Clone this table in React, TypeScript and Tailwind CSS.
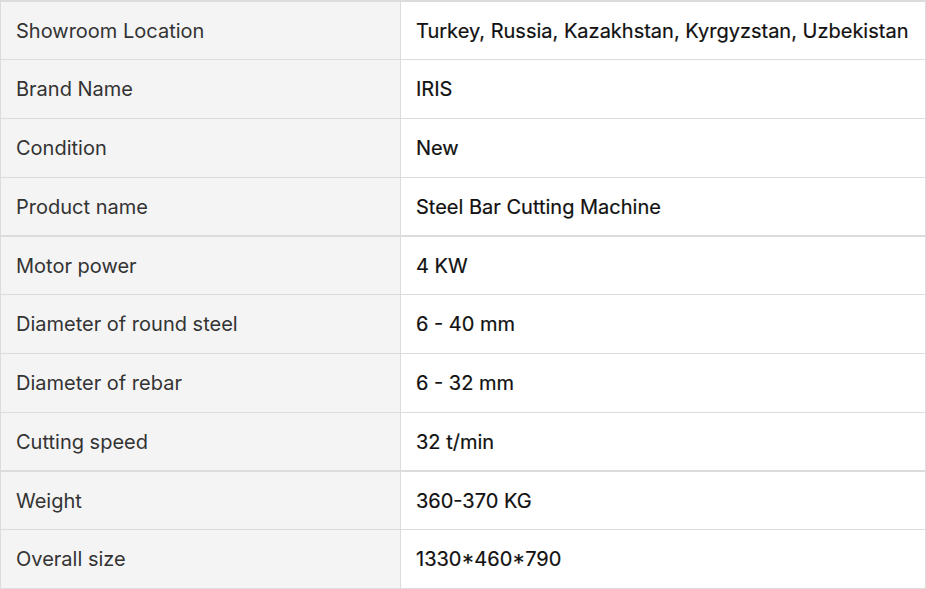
const groups: { label: string; value: string; h: string }[][] = [
  [
    { label: "Showroom Location", value: "Turkey, Russia, Kazakhstan, Kyrgyzstan, Uzbekistan", h: "h-[58px]" },
    { label: "Brand Name", value: "IRIS", h: "h-[59px]" },
    { label: "Condition", value: "New", h: "h-[59px]" },
    { label: "Product name", value: "Steel Bar Cutting Machine", h: "h-[58px]" },
  ],
  [
    { label: "Motor power", value: "4 KW", h: "h-[58px]" },
    { label: "Diameter of round steel", value: "6 - 40 mm", h: "h-[59px]" },
    { label: "Diameter of rebar", value: "6 - 32 mm", h: "h-[59px]" },
    { label: "Cutting speed", value: "32 t/min", h: "h-[58px]" },
  ],
  [
    { label: "Weight", value: "360-370 KG", h: "h-[58px]" },
    { label: "Overall size", value: "1330*460*790", h: "h-[59px]" },
  ],
];

export default function App() {
  return (
    <div className="w-[926px] h-[589px] bg-white font-['Inter',sans-serif] text-[20px]">
      <div className="border-t border-l border-r border-[#dcdcdc]">
        {groups.map((rows, gi) => (
          <div key={gi} className="border-t border-[#dcdcdc]">
            {rows.map((r) => (
              <div key={r.label} className={`grid grid-cols-[400px_1fr] border-b border-[#dcdcdc] ${r.h}`}>
                <div className="flex items-center bg-[#f4f4f4] border-r border-[#dcdcdc] pl-[15px] text-[#333333]">
                  {r.label}
                </div>
                <div className="flex items-center pl-[15px] text-[#111111] [-webkit-text-stroke:0.2px_#111111]">
                  {r.value}
                </div>
              </div>
            ))}
          </div>
        ))}
      </div>
    </div>
  );
}
